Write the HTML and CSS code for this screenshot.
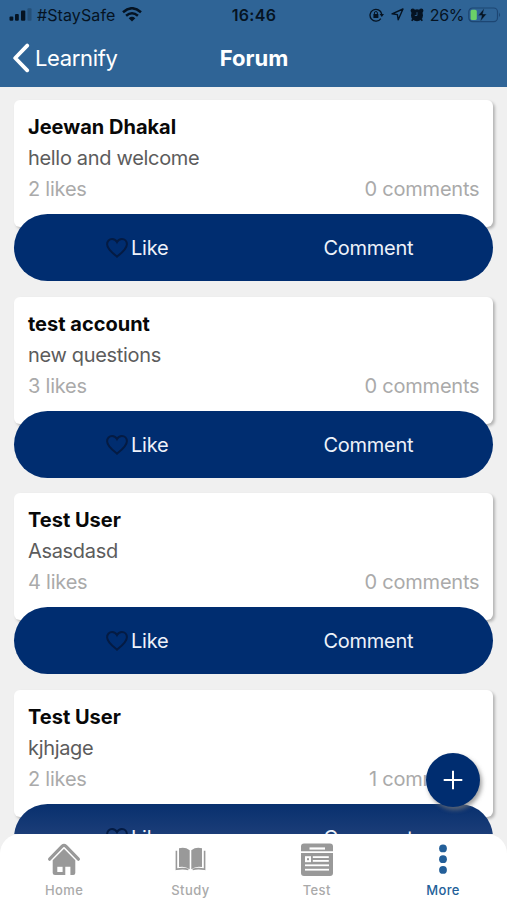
FILE: index.html
```html
<!DOCTYPE html>
<html lang="en">
<head>
<meta charset="utf-8">
<title>Forum</title>
<link rel="stylesheet" href="styles.css">
</head>
<body>
<div class="app">
  <header class="header">
    <div class="status">
      <div class="status-left">
        <svg class="signal" width="23" height="13" viewBox="0 0 23 13"><rect x="0.5" y="8.5" width="3.8" height="4.3" rx="1"/><rect x="6" y="6" width="3.8" height="6.8" rx="1"/><rect x="12" y="2.5" width="4.3" height="10.3" rx="1"/><rect x="18.5" y="0.3" width="4" height="12.5" rx="1" opacity=".25"/></svg>
        <span class="carrier">#StaySafe</span>
        <svg class="wifi" width="20" height="15" viewBox="0 0 20 15"><g fill="none" stroke="#051322" stroke-width="2.5"><path d="M1 5.3Q10-2.8 19 5.3"/><path d="M4.1 8.8Q10 3.6 15.9 8.8"/></g><path d="M6.7 11.2Q10 8.3 13.3 11.2L10 14.6Z"/></svg>
      </div>
      <span class="clock">16:46</span>
      <div class="status-right">
        <svg width="16" height="14" viewBox="0 0 16 14"><path d="M11.8 10.6A5.9 5.9 0 1 1 12.7 6" fill="none" stroke="#051322" stroke-width="1.3"/><path d="M10.6 6h4.4l-2.2 3z"/><rect x="4.4" y="6" width="5" height="4" rx=".5"/><path d="M5.4 6.4V5a1.5 1.5 0 0 1 3 0v1.4" fill="none" stroke="#051322"/></svg>
        <svg class="arrow" width="13" height="13" viewBox="0 0 13 13"><path d="M12 1 7.2 11.8 6.4 6.6 1 5.8Z" fill="none" stroke="#051322" stroke-width="1.4" stroke-linejoin="round"/></svg>
        <svg class="alarm" width="14" height="14" viewBox="0 0 14 14"><circle cx="7" cy="7.3" r="6"/><circle cx="2.8" cy="2.7" r="2.2"/><circle cx="11.2" cy="2.7" r="2.2"/><path d="m3 11.2-1.3 1.6M11 11.2l1.3 1.6" stroke="#051322" stroke-width="1.8"/><path d="M7 4.2v3.3H4.8" fill="none" stroke="#2f6496" stroke-width=".8"/></svg>
        <span class="percent">26%</span>
        <svg class="battery" width="33" height="16" viewBox="0 0 33 16"><rect x=".8" y="1" width="28.7" height="13.6" rx="3.8" fill="none" stroke="#1d4673" stroke-width="1.2"/><path d="M31 5.5q2.2 2.3 0 4.6z" fill="#1d4673"/><rect x="2.6" y="2.7" width="6.2" height="10.4" rx="1.7" fill="#6bd168"/><path d="M16.3 1.3 10.2 8.6h3.6l-1.5 5.8 6.2-7.4h-3.7z" stroke="#2f6496" stroke-width=".4"/></svg>
      </div>
    </div>
    <div class="nav">
      <div class="back"><svg width="18" height="30" viewBox="0 0 18 30"><path d="M15.2 2.6 3.2 15l12 12.3" fill="none" stroke="#fff" stroke-width="3.8" stroke-linecap="round" stroke-linejoin="round"/></svg><span>Learnify</span></div>
      <h1>Forum</h1>
    </div>
  </header>
  <main class="feed">
    <article class="post">
      <div class="card"><h2>Jeewan Dhakal</h2><p>hello and welcome</p><div class="counts"><span>2 likes</span><span>0 comments</span></div></div>
      <div class="actions"><div class="like"><svg width="22" height="20" viewBox="0 0 22 20"><path d="M11 18.6C8 16.2 1.1 11.4 1.1 6.3 1.1 3.2 3.3 1 6.1 1 8.3 1 10 2.2 11 4.1 12 2.2 13.7 1 15.9 1c2.8 0 5 2.2 5 5.3 0 5.1-6.9 9.9-9.9 12.3Z"/></svg><span>Like</span></div><span class="comment">Comment</span></div>
    </article>
    <article class="post">
      <div class="card"><h2>test account</h2><p>new questions</p><div class="counts"><span>3 likes</span><span>0 comments</span></div></div>
      <div class="actions"><div class="like"><svg width="22" height="20" viewBox="0 0 22 20"><path d="M11 18.6C8 16.2 1.1 11.4 1.1 6.3 1.1 3.2 3.3 1 6.1 1 8.3 1 10 2.2 11 4.1 12 2.2 13.7 1 15.9 1c2.8 0 5 2.2 5 5.3 0 5.1-6.9 9.9-9.9 12.3Z"/></svg><span>Like</span></div><span class="comment">Comment</span></div>
    </article>
    <article class="post">
      <div class="card"><h2>Test User</h2><p>Asasdasd</p><div class="counts"><span>4 likes</span><span>0 comments</span></div></div>
      <div class="actions"><div class="like"><svg width="22" height="20" viewBox="0 0 22 20"><path d="M11 18.6C8 16.2 1.1 11.4 1.1 6.3 1.1 3.2 3.3 1 6.1 1 8.3 1 10 2.2 11 4.1 12 2.2 13.7 1 15.9 1c2.8 0 5 2.2 5 5.3 0 5.1-6.9 9.9-9.9 12.3Z"/></svg><span>Like</span></div><span class="comment">Comment</span></div>
    </article>
    <article class="post">
      <div class="card"><h2>Test User</h2><p>kjhjage</p><div class="counts"><span>2 likes</span><span>1 comments</span></div></div>
      <div class="actions fading"><div class="like"><svg width="22" height="20" viewBox="0 0 22 20"><path d="M11 18.6C8 16.2 1.1 11.4 1.1 6.3 1.1 3.2 3.3 1 6.1 1 8.3 1 10 2.2 11 4.1 12 2.2 13.7 1 15.9 1c2.8 0 5 2.2 5 5.3 0 5.1-6.9 9.9-9.9 12.3Z"/></svg><span>Like</span></div><span class="comment">Comment</span></div>
    </article>
    <div class="add"><svg width="20" height="20" viewBox="0 0 20 20"><path d="M10 .7v18.6M.7 10h18.6" stroke="#fff" stroke-width="2"/></svg></div>
  </main>
  <nav class="tabs">
    <div class="tab"><svg width="34" height="34" viewBox="0 0 34 34"><path d="M2.6 17.2 15.2 4.2q1.800-1.700 3.600 0L31.400 17.200" fill="none" stroke="#999" stroke-width="3.200" stroke-linecap="round"/><path d="M17 6.800 28.300 18.200V31q0 2-2 2h-2.900v-8.200h-5.100V33H8q-2.300 0-2.300-2V18.200Z"/><rect x="10.300" y="24.800" width="5.300" height="5.200" fill="#fff"/></svg><span>Home</span></div>
    <div class="tab"><svg width="34" height="34" viewBox="0 0 34 34"><path d="M16.700 8.200Q12 4.600 6 6.300V25q6-1.300 10.700 2.200ZM18.300 8.200Q23 4.600 29 6.300V25q-6-1.300-10.700 2.200Z"/><path d="M3.400 8.700v18.500q7.500-1.200 12 .3M31.600 8.700v18.500q-7.500-1.200-12 .3" fill="none" stroke="#999" stroke-width="1.600"/></svg><span>Study</span></div>
    <div class="tab"><svg width="34" height="34" viewBox="0 0 34 34"><path d="M1 9.200V4.500q0-3 3-3h26q3 0 3 3v4.700ZM1 10.900h32v20q0 3-3 3H4q-3 0-3-3Z"/><g fill="#fff"><rect x="9.500" y="5.400" width="15.500" height="2.200"/><rect x="5" y="14.200" width="6" height="6"/><rect x="12.800" y="14.200" width="16" height="1.800"/><rect x="12.800" y="18" width="16" height="1.800"/><rect x="5" y="22.400" width="24" height="1.800"/><rect x="5" y="26.800" width="24" height="1.800"/></g><rect x="7" y="16.200" width="2" height="2"/></svg><span>Test</span></div>
    <div class="tab active"><svg width="34" height="34" viewBox="0 0 34 34"><circle cx="17" cy="6.400" r="3.900"/><circle cx="17" cy="17.200" r="3.900"/><circle cx="17" cy="27.900" r="3.900"/></svg><span>More</span></div>
  </nav>
</div>
</body>
</html>
```
FILE: styles.css
```css
* { box-sizing: border-box; }
body { margin: 0; font-family: Inter, "Liberation Sans", sans-serif; }
svg { display: block; flex: none; }
h1, h2, p { margin: 0; }
.app { position: relative; height: 900px; display: flex; flex-direction: column; overflow: hidden; background: #f0f0f0; }
.header { height: 87px; flex: none; background: #2f6496; }
.status { height: 29px; display: grid; grid-template-columns: 1fr auto 1fr; align-items: center; padding: 0 8px 0 9px; color: #051322; fill: #051322; font-size: 16px; line-height: 20px; }
.status-left { display: flex; align-items: center; }
.carrier { margin: 0 7px 0 5px; letter-spacing: 0.1px; }
.clock { font-weight: 600; letter-spacing: 0.3px; }
.status-right { display: flex; align-items: center; justify-content: flex-end; }
.status-right > svg:first-child { margin-right: 2px; }
.arrow { margin: 0 6px 0 4px; }
.alarm { margin-right: 6px; }
.percent { letter-spacing: -0.4px; margin-right: 4px; }
.battery { margin-right: -2px; }
.nav { height: 58px; display: grid; grid-template-columns: 1fr auto 1fr; align-items: center; padding: 0 11px 0 12px; color: #fff; }
.back { display: flex; align-items: center; gap: 5px; font-size: 22px; letter-spacing: -0.35px; }
h1 { font-size: 22px; font-weight: 700; }
.feed { flex: 1; min-height: 0; padding: 13px 13.6px 0 14.4px; display: flex; flex-direction: column; gap: 15.6px; overflow: hidden; }
.post { flex: none; }
.card { height: 127px; border-radius: 6px; background: #fff; padding: 12px 14px 12px 13.6px; box-shadow: 2px 2px 3px rgba(0, 0, 0, .25); line-height: 31px; font-size: 20px; letter-spacing: -0.32px; }
h2 { font-size: 20px; font-weight: 700; line-height: 31px; letter-spacing: 0; color: #080808; }
.card p { color: #5c5c5c; }
.counts { display: flex; justify-content: space-between; color: #aaa; letter-spacing: -0.22px; }
.actions { position: relative; height: 67px; margin-top: -13px; border-radius: 34px; background: #002d70; color: #eef2fa; display: grid; grid-template-columns: 1fr 1fr; align-items: center; padding: 1px 7px 0 0; font-size: 20px; letter-spacing: -0.25px; }
.fading { background: linear-gradient(#08306e, #1b3d78 45%); }
.like { display: flex; align-items: center; gap: 3px; padding-left: 91.6px; }
.like svg { fill: none; stroke: #041b43; stroke-width: 2; }
.comment { text-align: center; }
.add { position: absolute; left: 426px; top: 753px; width: 54px; height: 54px; border-radius: 50%; background: #002d70; box-shadow: 2px 3px 4px rgba(120, 120, 120, .7); display: grid; place-items: center; }
.tabs { position: relative; height: 66px; flex: none; display: grid; grid-template-columns: repeat(4, 126.3px); padding-left: 1px; background: #fff; border-radius: 20px 20px 0 0; }
.tab { display: flex; flex-direction: column; align-items: center; padding-top: 8px; fill: #999; color: #aaa; font-size: 13px; font-weight: 500; line-height: 16px; letter-spacing: .4px; }
.tab span { margin-top: 6px; }
.active { fill: #235f99; color: #235f99; }
```
